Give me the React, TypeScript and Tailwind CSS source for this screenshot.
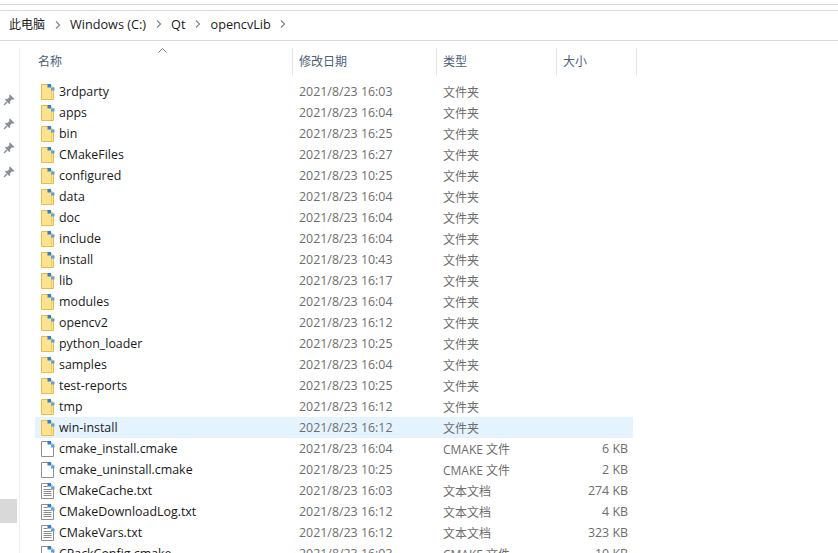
import type { ReactNode } from "react";

type Kind = "folder" | "file" | "text";

type Row = {
  name: string;
  date: string;
  type: string;
  size?: string;
  kind: Kind;
  selected?: boolean;
};

const rows: Row[] = [
  { name: "3rdparty", date: "2021/8/23 16:03", type: "文件夹", kind: "folder" },
  { name: "apps", date: "2021/8/23 16:04", type: "文件夹", kind: "folder" },
  { name: "bin", date: "2021/8/23 16:25", type: "文件夹", kind: "folder" },
  { name: "CMakeFiles", date: "2021/8/23 16:27", type: "文件夹", kind: "folder" },
  { name: "configured", date: "2021/8/23 10:25", type: "文件夹", kind: "folder" },
  { name: "data", date: "2021/8/23 16:04", type: "文件夹", kind: "folder" },
  { name: "doc", date: "2021/8/23 16:04", type: "文件夹", kind: "folder" },
  { name: "include", date: "2021/8/23 16:04", type: "文件夹", kind: "folder" },
  { name: "install", date: "2021/8/23 10:43", type: "文件夹", kind: "folder" },
  { name: "lib", date: "2021/8/23 16:17", type: "文件夹", kind: "folder" },
  { name: "modules", date: "2021/8/23 16:04", type: "文件夹", kind: "folder" },
  { name: "opencv2", date: "2021/8/23 16:12", type: "文件夹", kind: "folder" },
  { name: "python_loader", date: "2021/8/23 10:25", type: "文件夹", kind: "folder" },
  { name: "samples", date: "2021/8/23 16:04", type: "文件夹", kind: "folder" },
  { name: "test-reports", date: "2021/8/23 10:25", type: "文件夹", kind: "folder" },
  { name: "tmp", date: "2021/8/23 16:12", type: "文件夹", kind: "folder" },
  { name: "win-install", date: "2021/8/23 16:12", type: "文件夹", kind: "folder", selected: true },
  { name: "cmake_install.cmake", date: "2021/8/23 16:04", type: "CMAKE 文件", size: "6 KB", kind: "file" },
  { name: "cmake_uninstall.cmake", date: "2021/8/23 10:25", type: "CMAKE 文件", size: "2 KB", kind: "file" },
  { name: "CMakeCache.txt", date: "2021/8/23 16:03", type: "文本文档", size: "274 KB", kind: "text" },
  { name: "CMakeDownloadLog.txt", date: "2021/8/23 16:12", type: "文本文档", size: "4 KB", kind: "text" },
  { name: "CMakeVars.txt", date: "2021/8/23 16:12", type: "文本文档", size: "323 KB", kind: "text" },
  { name: "CPackConfig.cmake", date: "2021/8/23 16:03", type: "CMAKE 文件", size: "10 KB", kind: "file" },
];

const crumbs = ["Windows (C:)", "Qt", "opencvLib"];

function FileIcon({ kind }: { kind: Kind }) {
  if (kind === "folder") {
    return (
      <svg width="14" height="16" viewBox="0 0 14 16" className="shrink-0">
        <path d="M0.5 0.5H9L12.5 4V15.5H0.5Z" fill="#fde28f" stroke="#e6bd4c" />
        <path d="M10.5 6V14.5" fill="none" stroke="#f0cc66" />
        <rect x="6.5" y="0" width="3.5" height="3.5" fill="#2f80d0" />
        <rect x="10" y="3.5" width="3.5" height="3" fill="#5aa2e0" />
      </svg>
    );
  }
  return (
    <svg width="14" height="16" viewBox="0 0 14 16" className="shrink-0">
      <path d="M0.5 0.5H9L12.5 4V15.5H0.5Z" fill="#ffffff" stroke="#8f8f8f" />
      {kind === "text" && (
        <path d="M2.5 3.5H6.5M2.5 6.5H10.5M2.5 8.5H10.5M2.5 10.5H10.5M2.5 12.5H10.5" stroke="#8a8a8a" fill="none" />
      )}
      <rect x="6.5" y="0" width="3.5" height="3.5" fill="#2f80d0" />
      <rect x="10" y="3.5" width="3.5" height="3" fill="#5aa2e0" />
    </svg>
  );
}

function PinIcon() {
  return (
    <svg width="12" height="12" viewBox="0 0 12 12">
      <path d="M7 0.5L11.5 5L10.2 5.8L8.6 5.6L7 7.6L7.2 9.4L6.2 10L2 5.8L2.6 4.8L4.4 5L6.4 3.2L6.2 1.6Z" fill="#8a8f96" />
      <path d="M4 8L1 11" stroke="#8a8f96" strokeWidth="1.4" />
    </svg>
  );
}

function Chevron() {
  return (
    <svg width="6" height="8" viewBox="0 0 6 8" className="mx-[9.5px] shrink-0">
      <path d="M1 0.5L4.5 4L1 7.5" fill="none" stroke="#8a8a8a" strokeWidth="1.3" />
    </svg>
  );
}

function HeaderCell({ width, children }: { width: string; children?: ReactNode }) {
  return (
    <div className={`${width} flex h-[27px] items-center border-r border-[#e5e5e5] pl-[6px] text-[12px] text-[#4c607a]`}>
      {children}
    </div>
  );
}

export default function App() {
  return (
    <div className="relative flex h-[553px] w-[838px] flex-col overflow-hidden bg-white font-['Open_Sans','Noto_Sans_CJK_SC',sans-serif] text-[12.4px] leading-none">
      <div className="mt-[4px] h-[1px] bg-[#d9d9d9]" />
      <div className="mt-[5px] flex h-[31px] items-center border-y border-[#d9d9d9] pb-[2px] pl-[9px] text-[12.7px] text-[#1a1a1a]">
        <span className="text-[12px]">此电脑</span>
        <Chevron />
        {crumbs.map((c) => (
          <div key={c} className="flex items-center">
            <span>{c}</span>
            <Chevron />
          </div>
        ))}
      </div>

      <div className="flex min-h-0 flex-1">
        <aside className="mt-[7px] flex w-[20px] shrink-0 flex-col border-r border-[#f0f0f0]">
          <div className="flex flex-col items-center gap-[12px] pt-[46px] pr-[2px]">
            <PinIcon />
            <PinIcon />
            <PinIcon />
            <PinIcon />
          </div>
          <div className="mt-[321px] h-[24px] w-[17px] bg-[#d9d9d9]" />
        </aside>

        <main className="min-w-0 flex-1 pl-[15px]">
          <div className="relative mt-[7px] flex">
            <svg width="9" height="5" viewBox="0 0 9 5" className="absolute top-[0px] left-[123px]">
              <path d="M0.5 4.5L4.5 0.5L8.5 4.5" fill="none" stroke="#7a7a7a" />
            </svg>
            <div className="w-[258px] border-r border-[#e5e5e5]">
              <div className="flex h-[27px] items-center pl-[3px] text-[12px] text-[#4c607a]">名称</div>
            </div>
            <HeaderCell width="w-[144px]">修改日期</HeaderCell>
            <HeaderCell width="w-[120px]">类型</HeaderCell>
            <HeaderCell width="w-[80px]">大小</HeaderCell>
          </div>

          <div className="mt-[6px] w-[598px]">
            {rows.map((r) => (
              <div key={r.name} className={`flex h-[21px] items-center ${r.selected ? "bg-[#e5f3ff]" : ""}`}>
                <div className="flex w-[258px] items-center gap-[4px] pl-[6px] text-[#1a1a1a]">
                  <FileIcon kind={r.kind} />
                  <span className="whitespace-nowrap pt-[2px]">{r.name}</span>
                </div>
                <div className="w-[144px] pt-[2px] pl-[6px] text-[#6d6d6d]">{r.date}</div>
                <div className="w-[113px] pt-[2px] pl-[6px] text-[12px] text-[#6d6d6d]">{r.type}</div>
                <div className="w-[78px] pt-[2px] text-right text-[#6d6d6d]">{r.size}</div>
              </div>
            ))}
          </div>
        </main>
      </div>
    </div>
  );
}
